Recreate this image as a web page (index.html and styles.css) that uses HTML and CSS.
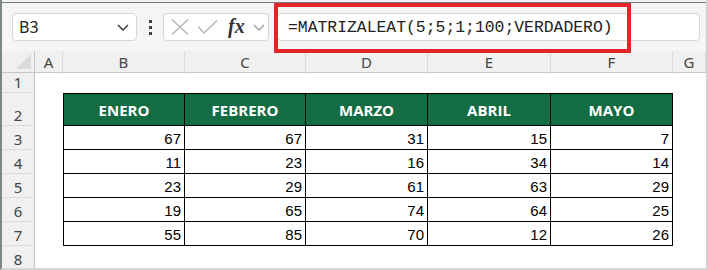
FILE: index.html
```html
<!DOCTYPE html>
<html lang="es">
<head>
    <meta charset="UTF-8">
    <meta name="viewport" content="width=device-width, initial-scale=1.0">
    <title>MATRIZALEAT</title>
    <link rel="stylesheet" href="styles.css">
</head>
<body>
    <div class="window">
        <div class="top-line"></div>

        <!-- formula bar -->
        <div class="formula-bar">
            <div class="name-box">
                <span>B3</span>
                <svg class="chevron" width="12" height="7" viewBox="0 0 12 7"><path d="M1 1 L6 6 L11 1" fill="none" stroke="#333" stroke-width="1.4"/></svg>
            </div>
            <div class="grip"><i></i><i></i><i></i></div>
            <div class="fx-buttons">
                <svg width="18" height="16" viewBox="0 0 18 16"><path d="M1 0.5 L17 15.5 M17 0.5 L1 15.5" stroke="#b4b4b4" stroke-width="1.3" fill="none"/></svg>
                <svg width="21" height="14" viewBox="0 0 21 14"><path d="M1 6.5 L7 13 L20 0.5" stroke="#b4b4b4" stroke-width="1.3" fill="none"/></svg>
                <span class="fx">fx</span>
                <svg width="12" height="7" viewBox="0 0 12 7"><path d="M1 1 L6 6 L11 1" fill="none" stroke="#9a9a9a" stroke-width="1.3"/></svg>
            </div>
            <div class="formula-input">=MATRIZALEAT(5;5;1;100;VERDADERO)</div>
        </div>

        <!-- sheet grid -->
        <div class="sheet">
            <div class="corner"><i></i></div>
            <div class="col-head">A</div>
            <div class="col-head">B</div>
            <div class="col-head">C</div>
            <div class="col-head">D</div>
            <div class="col-head">E</div>
            <div class="col-head">F</div>
            <div class="col-head">G</div>

            <div class="row-head">1</div>
            <div class="blank span-all"></div>

            <div class="row-head">2</div>
            <div class="blank"></div>
            <div class="th first">ENERO</div>
            <div class="th">FEBRERO</div>
            <div class="th">MARZO</div>
            <div class="th">ABRIL</div>
            <div class="th">MAYO</div>
            <div class="blank"></div>

            <div class="row-head">3</div>
            <div class="blank"></div>
            <div class="td first">67</div>
            <div class="td">67</div>
            <div class="td">31</div>
            <div class="td">15</div>
            <div class="td">7</div>
            <div class="blank"></div>

            <div class="row-head">4</div>
            <div class="blank"></div>
            <div class="td first">11</div>
            <div class="td">23</div>
            <div class="td">16</div>
            <div class="td">34</div>
            <div class="td">14</div>
            <div class="blank"></div>

            <div class="row-head">5</div>
            <div class="blank"></div>
            <div class="td first">23</div>
            <div class="td">29</div>
            <div class="td">61</div>
            <div class="td">63</div>
            <div class="td">29</div>
            <div class="blank"></div>

            <div class="row-head">6</div>
            <div class="blank"></div>
            <div class="td first">19</div>
            <div class="td">65</div>
            <div class="td">74</div>
            <div class="td">64</div>
            <div class="td">25</div>
            <div class="blank"></div>

            <div class="row-head">7</div>
            <div class="blank"></div>
            <div class="td first">55</div>
            <div class="td">85</div>
            <div class="td">70</div>
            <div class="td">12</div>
            <div class="td">26</div>
            <div class="blank"></div>

            <div class="row-head">8</div>
            <div class="blank span-all"></div>
        </div>

        <!-- red frame round the formula -->
        <div class="highlight"></div>
    </div>
</body>
</html>
```

FILE: styles.css
```css
body {
    margin: 0;
    padding: 0;
    background: #fff;
    font-family: "Noto Sans", "Open Sans", sans-serif;
    color: #222;
}
.window {
    position: relative;
    width: 708px;
    height: 270px;
    box-sizing: border-box;
    overflow: hidden;
    border-left: 2px solid #7d8787;
    border-right: 2px solid #d2d2d2;
    border-bottom: 2px solid #d6d6d6;
    background: #fff;
}
.top-line {
    height: 2px;
    background: #f2f2f2;
    border-bottom: 1px solid #6f7a7a;
}

/* formula bar */
.formula-bar {
    height: 48px;
    display: flex;
    align-items: center;
    padding-left: 10px;
    background: #f5f5f5;
}
.name-box {
    width: 125px;
    height: 28px;
    box-sizing: border-box;
    display: flex;
    align-items: center;
    justify-content: space-between;
    padding: 0 7px 0 6px;
    background: #fff;
    border: 1px solid #d6d6d6;
    border-radius: 4px;
    font-size: 16px;
    color: #222;
}
.grip {
    width: 26px;
    display: flex;
    flex-direction: column;
    align-items: center;
    gap: 3px;
}
.grip i {
    width: 3px;
    height: 3px;
    background: #444;
}
.fx-buttons {
    width: 106px;
    height: 28px;
    box-sizing: border-box;
    display: flex;
    align-items: center;
    padding: 0 3px 0 7px;
    gap: 8px;
    background: #fff;
    border: 1px solid #d6d6d6;
    border-radius: 4px;
}
.fx {
    font-family: "Liberation Serif", serif;
    font-style: italic;
    font-weight: bold;
    font-size: 20px;
    color: #333;
    margin-left: 2px;
    margin-top: -2px;
}
.formula-input {
    flex: 1;
    height: 28px;
    box-sizing: border-box;
    margin: 0 6px 0 8px;
    padding-left: 10px;
    display: flex;
    align-items: center;
    background: #fff;
    border: 1px solid #d6d6d6;
    border-radius: 4px;
    font-family: "Liberation Mono", monospace;
    font-size: 16.4px;
    color: #222;
}

/* sheet */
.sheet {
    display: grid;
    grid-template-columns: 33px 28px 122px 121px 122px 123px 122px 1fr;
    grid-template-rows: 22px 20px 33px repeat(6, 24px);
}
.corner {
    background: #f0f0f0;
    border-right: 1px solid #c6c6c6;
    border-bottom: 1px solid #c6c6c6;
    display: flex;
    justify-content: flex-end;
    align-items: flex-end;
    padding: 0 3px 3px 0;
}
.corner i {
    width: 15px;
    height: 15px;
    background: #dadada;
    clip-path: polygon(100% 0, 100% 100%, 0 100%);
}
.col-head {
    background: #f0f0f0;
    border-right: 1px solid #d9d9d9;
    border-bottom: 1px solid #c6c6c6;
    display: flex;
    align-items: center;
    justify-content: center;
    font-size: 15px;
    color: #444;
}
.row-head {
    background: #f0f0f0;
    border-right: 1px solid #c6c6c6;
    border-bottom: 1px solid #dcdcdc;
    display: flex;
    align-items: flex-end;
    justify-content: center;
    font-size: 15px;
    line-height: 19px;
    color: #444;
}
.blank {
    background: #fff;
}
.span-all {
    grid-column: 2 / -1;
}

/* green table */
.th {
    background: #146c43;
    color: #fff;
    font-family: "Open Sans", sans-serif;
    font-weight: bold;
    font-size: 15px;
    display: flex;
    align-items: center;
    justify-content: center;
    border-top: 1px solid #000;
    border-right: 1px solid #000;
    border-bottom: 1px solid #000;
}
.td {
    font-family: "Liberation Sans", Arial, sans-serif;
    font-size: 15px;
    color: #000;
    display: flex;
    align-items: center;
    justify-content: flex-end;
    padding: 1px 3px 0 0;
    border-right: 1px solid #000;
    border-bottom: 1px solid #000;
}
.first {
    border-left: 1px solid #000;
}

.highlight {
    position: absolute;
    left: 272px;
    top: 3px;
    width: 357px;
    height: 50px;
    box-sizing: border-box;
    border: 4px solid #e3242b;
}
```
